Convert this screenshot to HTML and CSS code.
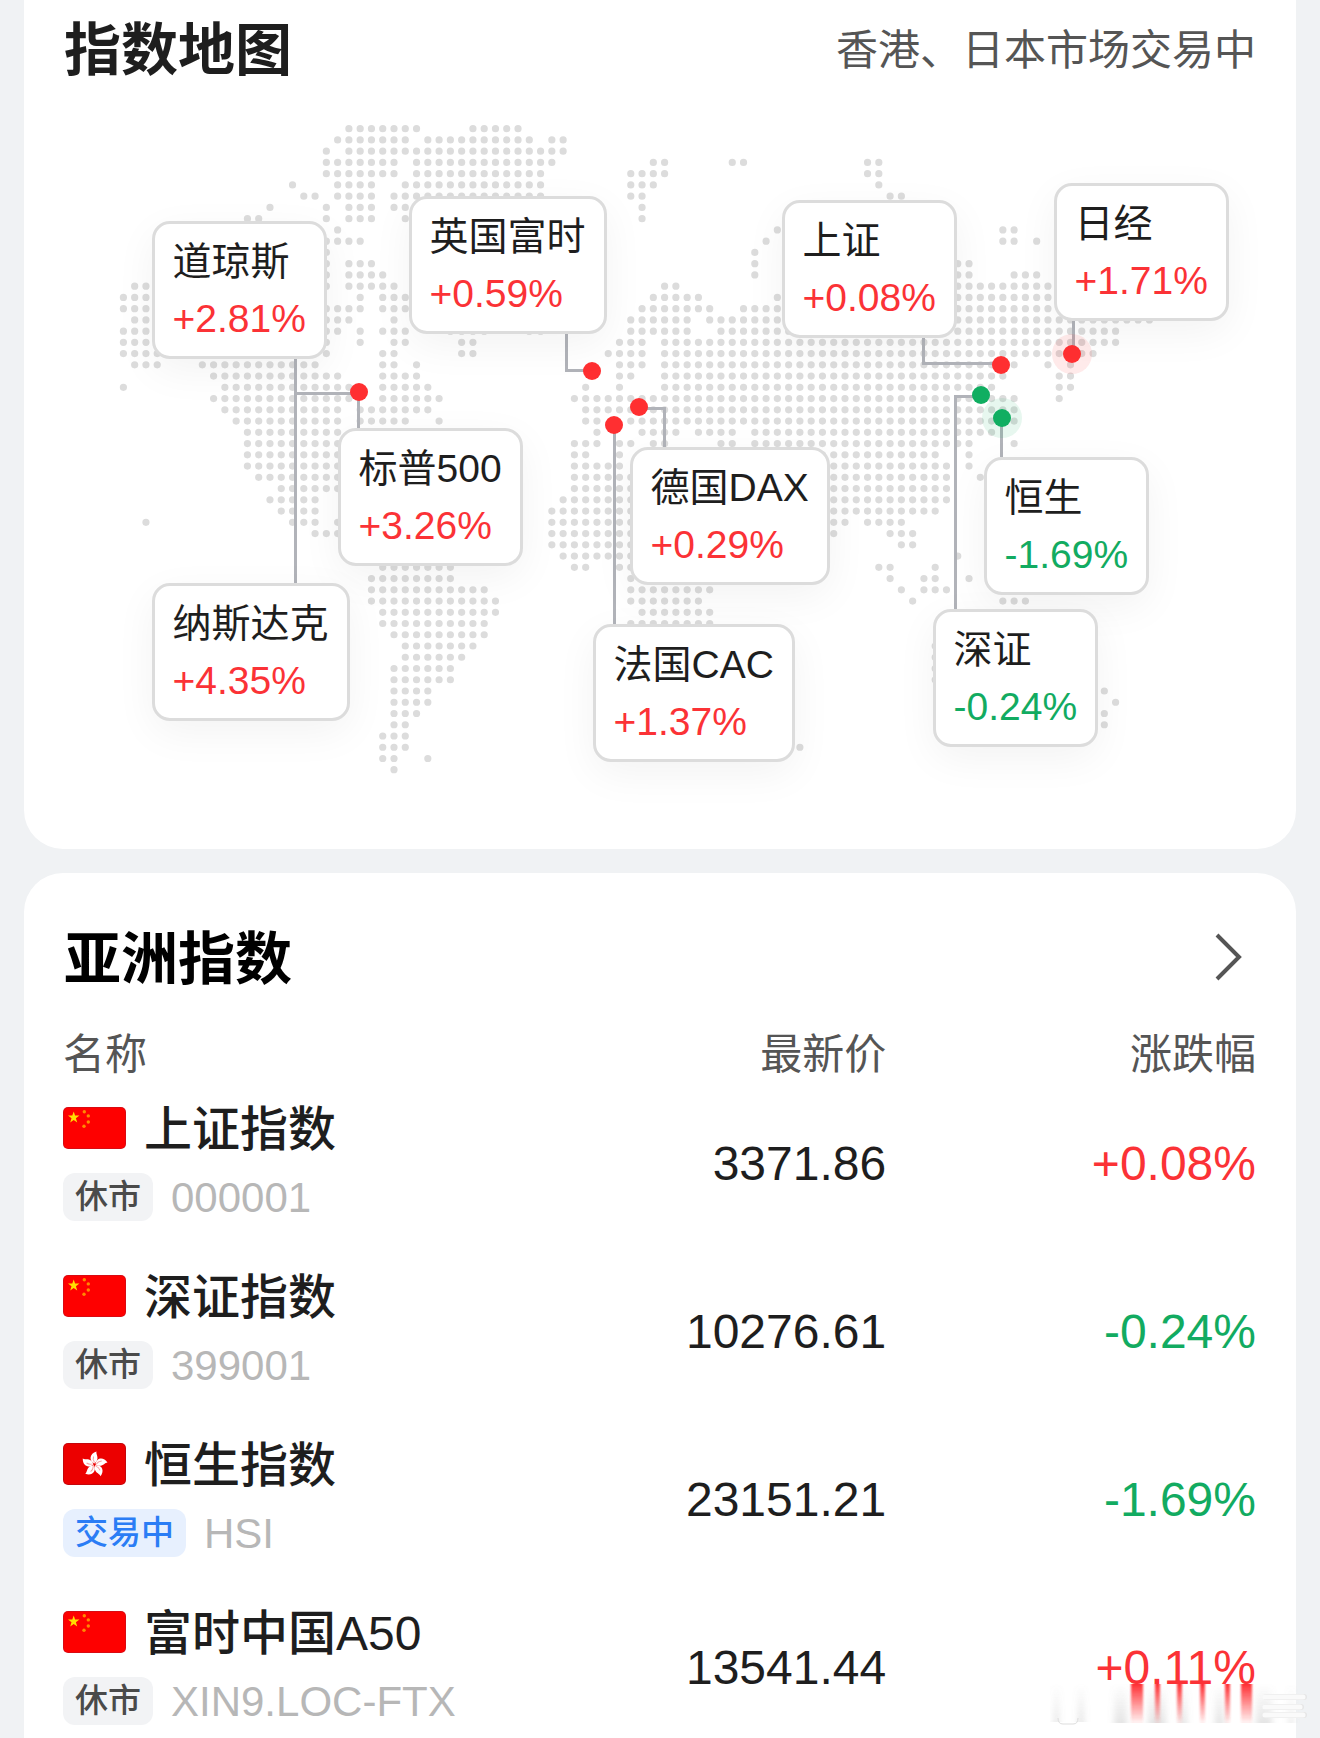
FILE: index.html
```html
<!DOCTYPE html>
<html lang="zh-CN">
<head>
<meta charset="utf-8">
<meta name="viewport" content="width=device-width, initial-scale=1">
<title>指数地图</title>
<link rel="stylesheet" href="styles.css">
</head>
<body>
<svg class="defs" aria-hidden="true">
  <symbol id="flag-cn" viewBox="0 0 63 42">
    <rect width="63" height="42" rx="5" fill="#d90a12"/>
    <rect x="1" y="1" width="61" height="40" rx="4" fill="#fe0000"/>
    <path fill="#ffde00" d="M10.700 4.500l1.400 4.100h4.300l-3.500 2.600 1.300 4.200-3.500-2.500-3.500 2.500 1.300-4.200-3.500-2.600h4.300z"/>
    <g fill="#ff8a00"><circle cx="21.300" cy="4.700" r="1.700"/><circle cx="25.300" cy="8.900" r="1.700"/><circle cx="25.300" cy="15" r="1.700"/><circle cx="21" cy="19.200" r="1.700"/></g>
  </symbol>
  <symbol id="flag-hk" viewBox="0 0 63 42">
    <rect width="63" height="42" rx="5" fill="#c4060c"/>
    <rect x="1" y="1" width="61" height="40" rx="4" fill="#ec0000"/>
    <g id="flower" fill="#fff" transform="translate(31.500 21.500)">
      <path id="petal" d="M0 -1C-6 -4 -5 -11 2 -13C1 -10 6 -6 0 -1z"/>
      <use href="#petal" transform="rotate(72)"/><use href="#petal" transform="rotate(144)"/>
      <use href="#petal" transform="rotate(216)"/><use href="#petal" transform="rotate(288)"/>
      <g stroke="#f8a0a2" stroke-width="1" fill="none"><path id="vein" d="M0 -2Q-2 -5 -1 -8"/><use href="#vein" transform="rotate(72)"/><use href="#vein" transform="rotate(144)"/><use href="#vein" transform="rotate(216)"/><use href="#vein" transform="rotate(288)"/></g>
    </g>
  </symbol>
</svg>

<main class="page">
  <section class="card map-card">
    <header class="card-head">
      <h2 class="title">指数地图</h2>
      <p class="status">香港、日本市场交易中</p>
    </header>
    <div class="stage">
      <svg class="world" viewBox="0 0 1152 700" aria-hidden="true">
        <!-- one unit is one dot of the grid; each run draws a row of dots -->
        <g transform="translate(39.400 38.700) scale(11.275 11.246)">
          <path class="land" d="M20 0h6.100M31 0h4.100
M19 1h6.100M27 1h9.100M38 1h1.100
M18 2h.1M20 2h19.100
M18 3h6.100M26 3h12.100M47 3h1.100M54 3h1.100M66 3h1.100
M18 4h6.100M26 4h11.100M45 4h3.100M66 4h1.100
M15 5h.1M19 5h3.100M25 5h12.100M45 5h2.100M67 5h.1
M16 6h1.100M19 6h3.100M24 6h13.100M45 6h1.100M68 6h1.100
M13 7h.1M18 7h.1M20 7h2.100M24 7h12.100M46 7h.1
M11 8h1.100M18 8h.1M20 8h2.100M25 8h10.100M46 8h.1
M19 9h.1M58 9h.1M78 9h1.100
M18 10h3.100M57 10h.1M78 10h1.100M81 10h.1
M18 11h.1M56 11h.1
M18 12h.1M20 12h2.100M56 12h.1M74 12h1.100
M18 13h.1M20 13h3.100M56 13h.1M74 13h1.100M79 13h2.100
M1 14h1.100M18 14h.1M20 14h4.100M48 14h1.100M74 14h8.100
M0 15h2.100M21 15h.1M23 15h2.100M47 15h4.100M58 15h24.100
M0 16h2.100M18 16h3.100M23 16h2.100M46 16h6.100M55 16h27.100
M1 17h1.100M18 17h2.100M24 17h.1M45 17h5.100M52 17h39.100
M0 18h2.100M18 18h1.100M21 18h.1M23 18h2.100M29 18h3.100M36 18h1.100M45 18h5.100M53 18h35.100
M0 19h2.100M18 19h.1M21 19h.1M24 19h1.100M30 19h1.100M44 19h2.100M48 19h40.100
M0 20h3.100M18 20h.1M23 20h1.100M30 20h1.100M43 20h3.100M48 20h38.100
M1 21h2.100M7 21h10.100M23 21h1.100M26 21h.1M44 21h2.100M48 21h31.100M82 21h.1M84 21h.1
M8 22h11.100M23 22h3.100M44 22h1.100M48 22h30.100M83 22h1.100
M0 23h.1M9 23h11.100M23 23h4.100M41 23h.1M44 23h.1M48 23h29.100M83 23h1.100
M8 24h12.100M23 24h5.100M40 24h39.100M83 24h.1
M9 25h10.100M21 25h6.100M41 25h38.100
M10 26h9.100M21 26h4.100M28 26h.1M41 26h1.100M45 26h34.100
M11 27h8.100M42 27h.1M46 27h3.100M51 27h3.100M56 27h21.100
M11 28h8.100M40 28h2.100M44 28h1.100M47 28h1.100M53 28h1.100M56 28h19.100M79 28h.1
M11 29h8.100M40 29h1.100M44 29h.1M56 29h16.100M75 29h.1
M11 30h8.100M40 30h4.100M56 30h17.100M75 30h.1
M12 31h7.100M40 31h5.100M56 31h17.100M76 31h.1
M14 32h5.100M40 32h5.100M56 32h17.100
M13 33h4.100M39 33h6.100M56 33h17.100
M14 34h3.100M38 34h7.100M58 34h14.100
M2 35h.1M15 35h2.100M19 35h.1M38 35h7.100M63 35h1.100M66 35h3.100
M17 36h2.100M38 36h7.100M63 36h.1M68 36h2.100
M38 37h7.100M69 37h1.100
M39 38h6.100M74 38h.1
M23 39h6.100M40 39h1.100M44 39h1.100M67 39h1.100M72 39h.1
M22 40h7.100M45 40h7.100M68 40h.1M71 40h1.100M75 40h.1
M22 41h10.100M45 41h7.100M69 41h.1M71 41h2.100
M22 42h11.100M45 42h6.100M70 42h.1M78 42h2.100
M23 43h10.100M46 43h6.100
M23 44h9.100M45 44h7.100
M24 45h8.100
M25 46h6.100M72 46h.1
M25 47h5.100M72 47h.1
M24 48h5.100M72 48h.1
M24 49h5.100M72 49h.1
M24 50h3.100M87 50h.1
M24 51h3.100M88 51h.1
M24 52h2.100M87 52h.1
M24 53h1.100M87 53h.1
M23 54h2.100
M23 55h2.100M60 55h.1
M23 56h1.100M27 56h.1
M24 57h.1"/>
        </g>
        <path class="wires" d="M211.500 269V493M211.500 303.500H275M274.500 302V338M482.500 244V280.500H508M555 318.500H580.500V357M530.500 335V534M839.500 248V273.500H917M897 306.500H871.500V519M917.500 328V367M989.500 231V264"/>
        <g class="dot-up">
          <circle class="halo" cx="988" cy="264" r="20"/>
          <circle cx="988" cy="264" r="9"/>
          <circle cx="275" cy="302" r="9"/>
          <circle cx="508" cy="281" r="9"/>
          <circle cx="555" cy="317" r="9"/>
          <circle cx="530" cy="335" r="9"/>
          <circle cx="917" cy="275" r="9"/>
        </g>
        <g class="dot-down">
          <circle class="halo" cx="918" cy="328" r="20"/>
          <circle cx="918" cy="328" r="9"/>
          <circle cx="897" cy="305" r="9"/>
        </g>
      </svg>
      <div class="pin pin-dow"><span>道琼斯</span><span class="up">+2.81%</span></div>
      <div class="pin pin-ftse"><span>英国富时</span><span class="up">+0.59%</span></div>
      <div class="pin pin-sse"><span>上证</span><span class="up">+0.08%</span></div>
      <div class="pin pin-nikkei"><span>日经</span><span class="up">+1.71%</span></div>
      <div class="pin pin-spx"><span>标普500</span><span class="up">+3.26%</span></div>
      <div class="pin pin-nasdaq"><span>纳斯达克</span><span class="up">+4.35%</span></div>
      <div class="pin pin-dax"><span>德国DAX</span><span class="up">+0.29%</span></div>
      <div class="pin pin-cac"><span>法国CAC</span><span class="up">+1.37%</span></div>
      <div class="pin pin-hsi"><span>恒生</span><span class="down">-1.69%</span></div>
      <div class="pin pin-szse"><span>深证</span><span class="down">-0.24%</span></div>
    </div>
  </section>

  <section class="card list-card">
    <header class="card-head">
      <h2 class="title title-dark">亚洲指数</h2>
      <a class="more" href="#asia" aria-label="更多">
        <svg width="30" height="50" viewBox="0 0 30 50" aria-hidden="true"><path d="M3 3l22 22L3 47" fill="none" stroke="#555" stroke-width="4"/></svg>
      </a>
    </header>
    <table class="quotes" id="asia">
      <thead>
        <tr><th class="col-name">名称</th><th>最新价</th><th>涨跌幅</th></tr>
      </thead>
      <tbody>
        <tr>
          <td><div class="line"><svg class="flag" aria-hidden="true"><use href="#flag-cn"/></svg><span class="name">上证指数</span></div>
            <div class="line sub"><span class="badge">休市</span><span class="code">000001</span></div></td>
          <td>3371.86</td><td class="up">+0.08%</td>
        </tr>
        <tr>
          <td><div class="line"><svg class="flag" aria-hidden="true"><use href="#flag-cn"/></svg><span class="name">深证指数</span></div>
            <div class="line sub"><span class="badge">休市</span><span class="code">399001</span></div></td>
          <td>10276.61</td><td class="down">-0.24%</td>
        </tr>
        <tr>
          <td><div class="line"><svg class="flag" aria-hidden="true"><use href="#flag-hk"/></svg><span class="name">恒生指数</span></div>
            <div class="line sub"><span class="badge badge-open">交易中</span><span class="code">HSI</span></div></td>
          <td>23151.21</td><td class="down">-1.69%</td>
        </tr>
        <tr>
          <td><div class="line"><svg class="flag" aria-hidden="true"><use href="#flag-cn"/></svg><span class="name">富时中国A50</span></div>
            <div class="line sub"><span class="badge">休市</span><span class="code">XIN9.LOC-FTX</span></div></td>
          <td>13541.44</td><td class="up">+0.11%</td>
        </tr>
      </tbody>
    </table>
    <svg class="smear" width="260" height="42" viewBox="0 0 260 42" aria-hidden="true">
      <defs>
        <linearGradient id="fade-red" x1="0" y1="0" x2="0" y2="1"><stop offset="0" stop-color="#ff3034"/><stop offset="1" stop-color="#ff3034" stop-opacity="0.050"/></linearGradient>
        <linearGradient id="fade-gray" x1="0" y1="0" x2="0" y2="1"><stop offset="0" stop-color="#888" stop-opacity="0"/><stop offset="1" stop-color="#888" stop-opacity="0.220"/></linearGradient>
        <filter id="soft" x="-50%" y="-20%" width="200%" height="140%"><feGaussianBlur stdDeviation="3 0"/></filter>
        <filter id="thin" x="-50%" y="-20%" width="200%" height="140%"><feGaussianBlur stdDeviation="1 0"/></filter>
      </defs>
      <g fill="url(#fade-gray)" filter="url(#soft)">
        <rect x="4" y="0" width="5" height="38"/><rect x="28" y="0" width="6" height="38"/>
        <rect x="64" y="0" width="13" height="39"/><rect x="98" y="0" width="18" height="39"/>
        <rect x="130" y="0" width="7" height="39"/><rect x="165" y="0" width="9" height="39"/>
        <rect x="206" y="0" width="16" height="39"/><rect x="239" y="0" width="4" height="39"/>
      </g>
      <path d="M8 34q0 6 5 6h10q5 0 5-6" fill="none" stroke="#ddd" stroke-width="1"/>
      <g stroke="#e6e6e6" stroke-width="6" stroke-linecap="round"><path d="M216 13h38M216 23h35M216 31h38"/></g>
      <g stroke="#fafafa" stroke-width="5" stroke-linecap="round"><path d="M215 13h38M215 23h35M215 31h38"/></g>
      <g fill="url(#fade-red)" filter="url(#thin)">
        <rect x="81" y="0" width="12" height="39"/><rect x="105" y="0" width="5" height="39"/>
        <rect x="127" y="0" width="5" height="39"/><rect x="150" y="0" width="5" height="39"/>
        <rect x="175" y="0" width="5" height="39"/><rect x="191" y="0" width="11" height="39"/>
      </g>
    </svg>
  </section>
</main>
</body>
</html>
```

FILE: styles.css
```css
* {
  box-sizing: border-box;
}

body {
  margin: 0;
  background: #f0f2f4;
  color: #1e1e1e;
  font-family: "Liberation Sans", "Noto Sans CJK SC", sans-serif;
}

.defs {
  position: absolute;
  width: 0;
  height: 0;
}

.page {
  display: flex;
  flex-direction: column;
  gap: 24px;
  padding: 0 24px;
}

.card {
  padding: 0 40px 0 39px;
  background: #fff;
}

.map-card {
  padding-top: 10px;
  padding-bottom: 59px;
  border-radius: 0 0 39px 39px;
}

.list-card {
  position: relative;
  padding-top: 46px;
  border-radius: 39px 39px 0 0;
}

.card-head {
  display: flex;
  align-items: center;
  justify-content: space-between;
  height: 80px;
}

.title {
  margin: 0;
  padding-left: 1px;
  font-size: 57px;
  line-height: 80px;
  font-weight: 700;
}

.title-dark {
  color: #000;
}

.status {
  margin: 0;
  padding-top: 2px;
  color: #555;
  font-size: 42px;
  line-height: 80px;
}

.more {
  display: flex;
  padding: 0 12px 4px;
}

/* World map: the pins sit on a free canvas */
.stage {
  position: relative;
  width: 1152px;
  height: 700px;
  margin: 0 auto;
}

.world {
  display: block;
  width: 100%;
  height: 100%;
}

.land {
  fill: none;
  stroke: #dcdcdc;
  stroke-width: 0.64;
  stroke-linecap: round;
  stroke-dasharray: 0 1;
}

.wires {
  fill: none;
  stroke: #b1b3b9;
  stroke-width: 3;
}

.dot-up {
  fill: #ff2f31;
}

.dot-down {
  fill: #10ae61;
}

.halo {
  fill-opacity: 0.1;
}

.pin {
  position: absolute;
  display: flex;
  flex-direction: column;
  padding: 9px 18px;
  border: 3px solid #dcdcdc;
  border-radius: 18px;
  background: #fff;
  box-shadow: 0 12px 42px rgba(0, 0, 0, 0.05);
  font-size: 39px;
  line-height: 57px;
  white-space: nowrap;
}

.pin-dow { left: 68px; top: 131px; }
.pin-ftse { left: 325px; top: 106px; }
.pin-sse { left: 698px; top: 110px; }
.pin-nikkei { left: 970px; top: 93px; }
.pin-spx { left: 254px; top: 338px; }
.pin-nasdaq { left: 68px; top: 493px; }
.pin-dax { left: 546px; top: 357px; }
.pin-cac { left: 509px; top: 534px; }
.pin-hsi { left: 900px; top: 367px; }
.pin-szse { left: 849px; top: 519px; }

.up {
  color: #fb3236;
}

.down {
  color: #12ab61;
}

/* Quotes */
.quotes {
  width: 100%;
  margin-top: 27px;
  border-collapse: collapse;
  table-layout: fixed;
}

.quotes th {
  width: 31%;
  padding: 0 0 23px;
  color: #555;
  font-size: 42px;
  line-height: 58px;
  font-weight: 400;
  text-align: right;
}

.quotes .col-name {
  width: 38%;
  text-align: left;
}

.quotes td {
  padding: 0 0 54px;
  font-size: 48px;
  line-height: 54px;
  text-align: right;
  vertical-align: middle;
}

.quotes tr:last-child td {
  padding-bottom: 13px;
}

.line {
  display: flex;
  align-items: center;
  gap: 18px;
  height: 42px;
  white-space: nowrap;
}

.sub {
  height: 48px;
  margin-top: 24px;
}

.flag {
  width: 63px;
  height: 42px;
}

.name {
  padding-top: 4px;
  font-weight: 500;
}

.badge {
  padding: 0 12px;
  border-radius: 12px;
  background: #f2f3f5;
  color: #4a4a4a;
  font-size: 33px;
  line-height: 48px;
  font-weight: 500;
}

.badge-open {
  background: #e7f0fe;
  color: #2b7df5;
}

.code {
  padding-top: 2px;
  color: #b7b7b7;
  font-size: 42px;
}

.smear {
  position: absolute;
  right: -14px;
  bottom: 12px;
}
```
